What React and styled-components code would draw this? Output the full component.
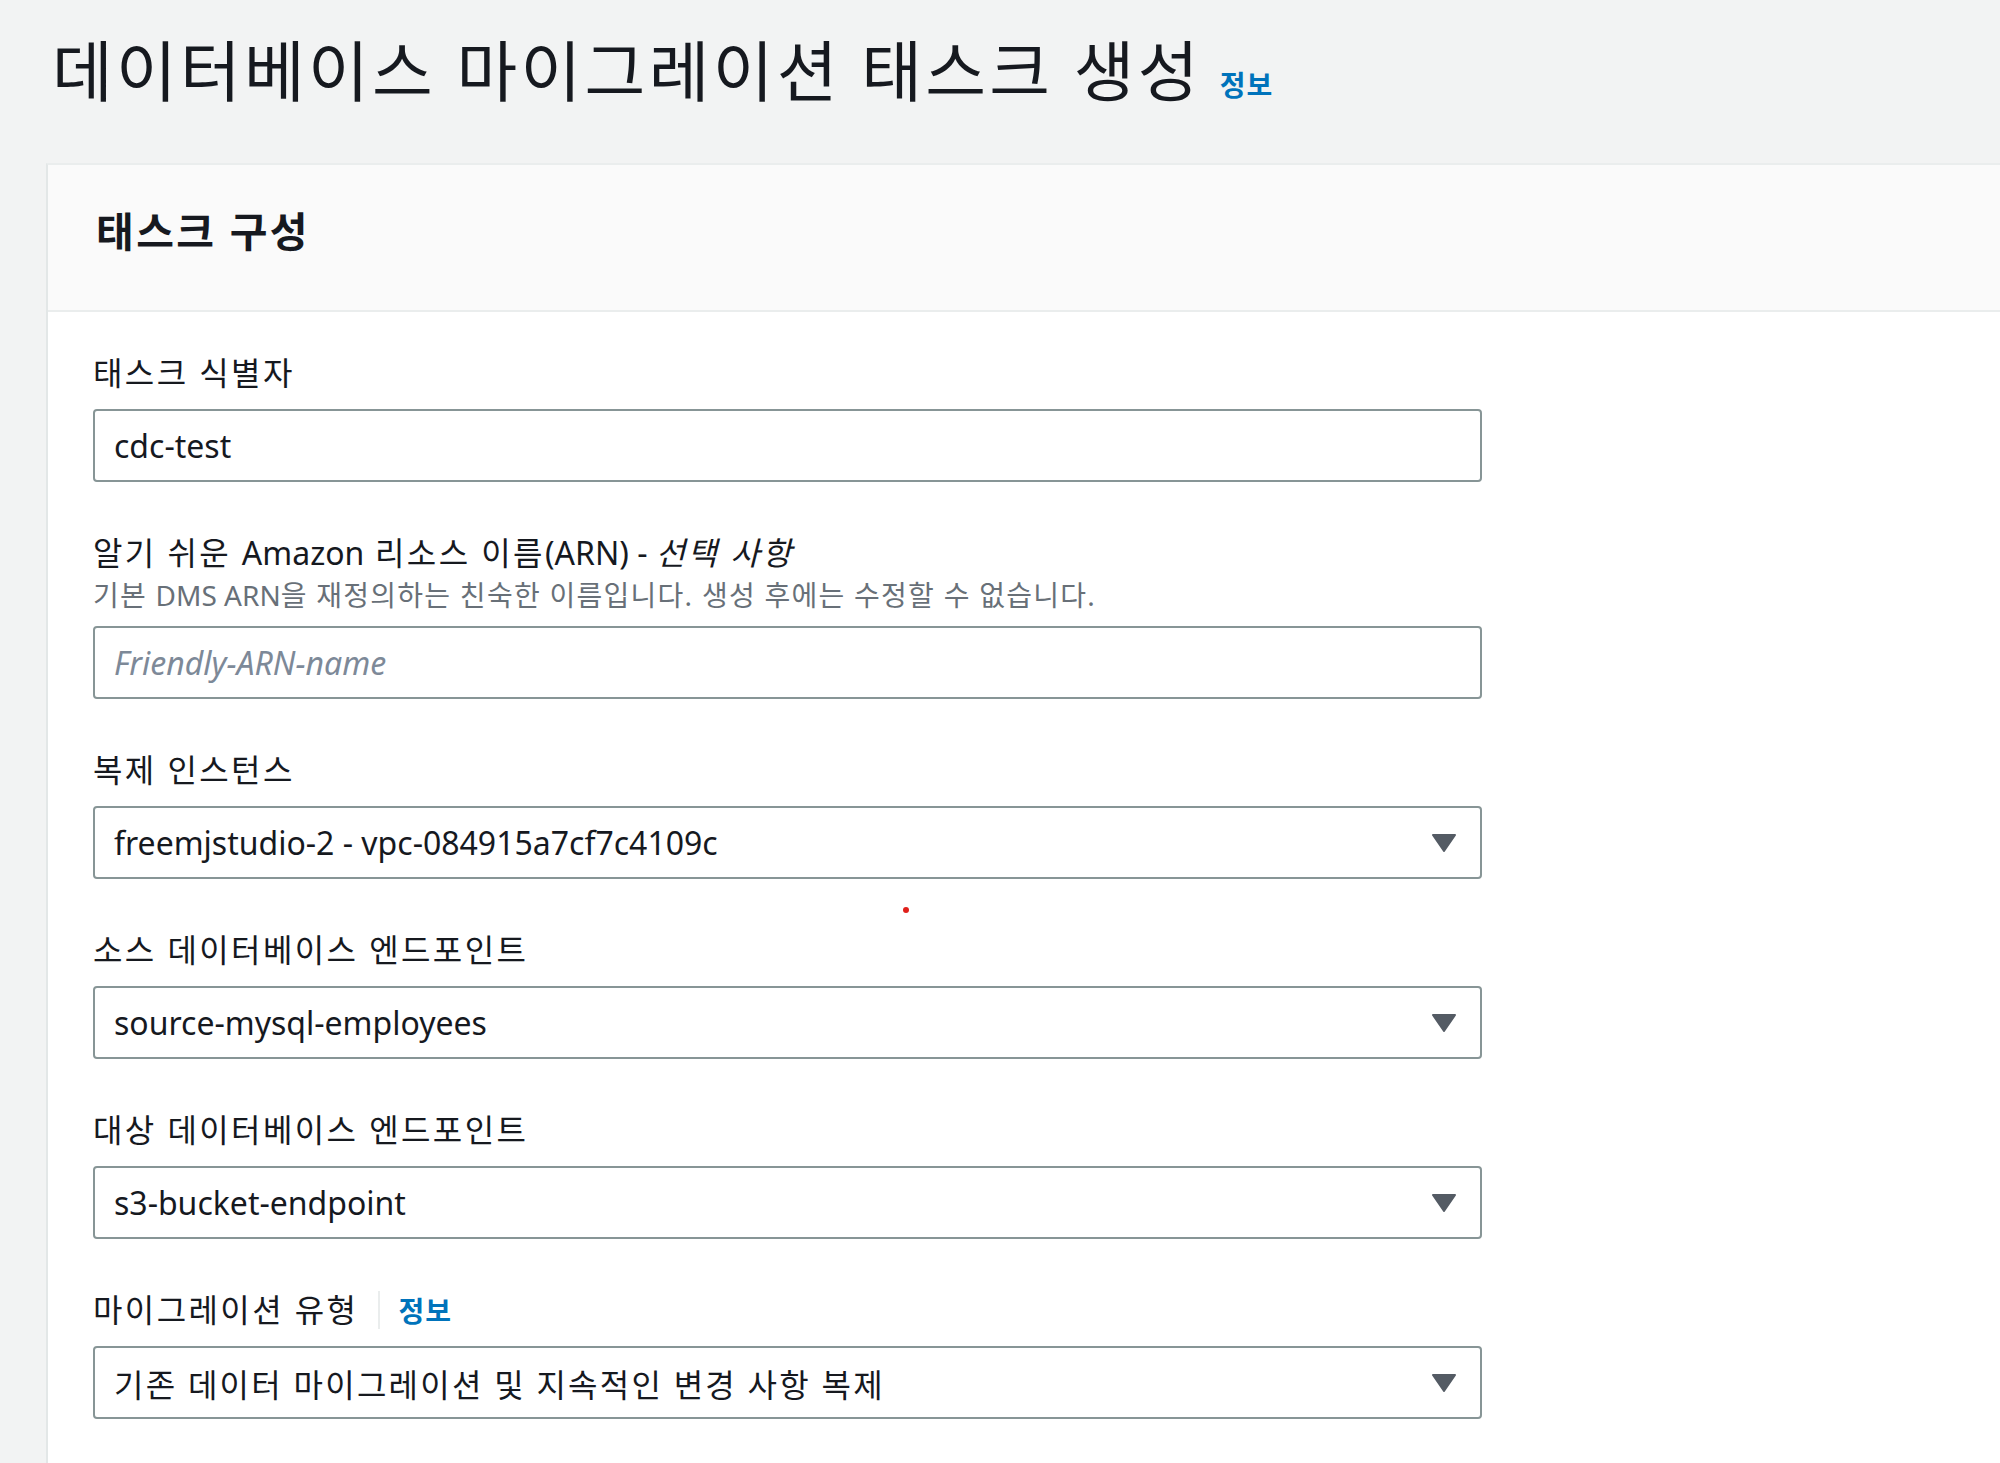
import React from "react";
import styled, { createGlobalStyle } from "styled-components";

const GlobalStyle = createGlobalStyle`
  html, body {
    margin: 0;
    padding: 0;
    background: #f2f3f3;
  }
  body {
    font-family: "Noto Sans", "Noto Sans CJK KR", sans-serif;
    color: #16191f;
  }
`;

const Page = styled.div`
  min-height: 1463px;
  padding-left: 46px;
  box-sizing: border-box;
  overflow: hidden;
`;

const TitleRow = styled.div`
  display: flex;
  align-items: baseline;
  gap: 18px;
  padding: 26px 0 0 6px;
  height: 163px;
  box-sizing: border-box;
`;

const Title = styled.h1`
  margin: 0;
  font-size: 66px;
  line-height: 88px;
  font-weight: 400;
  letter-spacing: 0.05em;
  color: #16191f;
`;

const InfoLink = styled.a`
  font-size: 28px;
  font-weight: 700;
  letter-spacing: 0.04em;
  color: #0073bb;
  text-decoration: none;
  cursor: pointer;
`;

/* latin runs inside korean text keep their natural spacing */
const Latin = styled.span`
  letter-spacing: 0;
`;

const Hangul = styled.span`
  letter-spacing: 0.07em;
`;

const Panel = styled.section`
  background: #ffffff;
  border-left: 2px solid #e3e7e7;
  border-top: 2px solid #eaeded;
  min-height: 1300px;
`;

const PanelHeader = styled.div`
  background: #fafafa;
  border-bottom: 2px solid #eaeded;
  padding: 40px 0 53px 48px;
`;

const PanelTitle = styled.h2`
  margin: 0;
  font-size: 41px;
  line-height: 52px;
  font-weight: 700;
  letter-spacing: 0.06em;
  color: #16191f;
`;

const Body = styled.div`
  position: relative;
  padding: 37px 0 0 45px;
  display: flex;
  flex-direction: column;
  gap: 47px;
`;

const Field = styled.div`
  display: flex;
  flex-direction: column;
  gap: 12px;
  width: 1389px;
`;

const FieldHead = styled.div`
  display: flex;
  flex-direction: column;
`;

const LabelRow = styled.div`
  display: flex;
  align-items: center;
  height: 48px;
`;

const Label = styled.label`
  font-size: 32px;
  line-height: 48px;
  letter-spacing: 0.075em;
  color: #16191f;

  em {
    font-style: italic;
  }
`;

const Divider = styled.span`
  width: 2px;
  height: 38px;
  background: #eaeded;
  margin: 0 18px 0 20px;
`;

const Description = styled.div`
  font-size: 28px;
  line-height: 37px;
  letter-spacing: 0.045em;
  color: #687078;
`;

const Control = styled.div`
  height: 73px;
  box-sizing: border-box;
  border: 2px solid #879596;
  border-radius: 4px;
  background: #fff;
  display: flex;
  align-items: center;
  justify-content: space-between;
  padding: 0 23px 0 19px;
  font-size: 32px;
  color: ${(p) => (p.$placeholder ? "#7d8998" : "#16191f")};
  font-style: ${(p) => (p.$placeholder ? "italic" : "normal")};
`;

const Caret = styled.svg`
  width: 26px;
  height: 18px;
  flex-shrink: 0;
`;

const CursorDot = styled.span`
  position: absolute;
  left: 855px;
  top: 595px;
  width: 6px;
  height: 6px;
  border-radius: 50%;
  background: #e0201b;
`;

const DropCaret = () => (
  <Caret viewBox="0 0 26 18">
    <path d="M2 1 L24 1 L13 17 Z" fill="#545b64" stroke="#545b64" strokeWidth="2" strokeLinejoin="round" />
  </Caret>
);

const fields = [
  { label: "태스크 식별자", value: "cdc-test" },
  {
    label: (
      <>
        알기 쉬운 <Latin>Amazon</Latin> 리소스 이름<Latin>(ARN) - </Latin>
        <em>선택 사항</em>
      </>
    ),
    description: (
      <>
        기본 <Latin>DMS ARN</Latin>을 재정의하는 친숙한 이름입니다. 생성 후에는 수정할 수 없습니다.
      </>
    ),
    value: "Friendly-ARN-name",
    placeholder: true,
  },
  { label: "복제 인스턴스", value: "freemjstudio-2 - vpc-084915a7cf7c4109c", select: true },
  { label: "소스 데이터베이스 엔드포인트", value: "source-mysql-employees", select: true },
  { label: "대상 데이터베이스 엔드포인트", value: "s3-bucket-endpoint", select: true },
  {
    label: "마이그레이션 유형",
    info: true,
    value: <Hangul>기존 데이터 마이그레이션 및 지속적인 변경 사항 복제</Hangul>,
    select: true,
  },
];

const App = () => {
  return (
    <>
      <GlobalStyle />
      <Page>
        <TitleRow>
          <Title>데이터베이스 마이그레이션 태스크 생성</Title>
          <InfoLink>정보</InfoLink>
        </TitleRow>
        <Panel>
          <PanelHeader>
            <PanelTitle>태스크 구성</PanelTitle>
          </PanelHeader>
          <Body>
            {fields.map((f, i) => (
              <Field key={i}>
                <FieldHead>
                  <LabelRow>
                    <Label>{f.label}</Label>
                    {f.info && (
                      <>
                        <Divider />
                        <InfoLink>정보</InfoLink>
                      </>
                    )}
                  </LabelRow>
                  {f.description && <Description>{f.description}</Description>}
                </FieldHead>
                <Control $placeholder={f.placeholder}>
                  <span>{f.value}</span>
                  {f.select && <DropCaret />}
                </Control>
              </Field>
            ))}
            <CursorDot />
          </Body>
        </Panel>
      </Page>
    </>
  );
};

export default App;
